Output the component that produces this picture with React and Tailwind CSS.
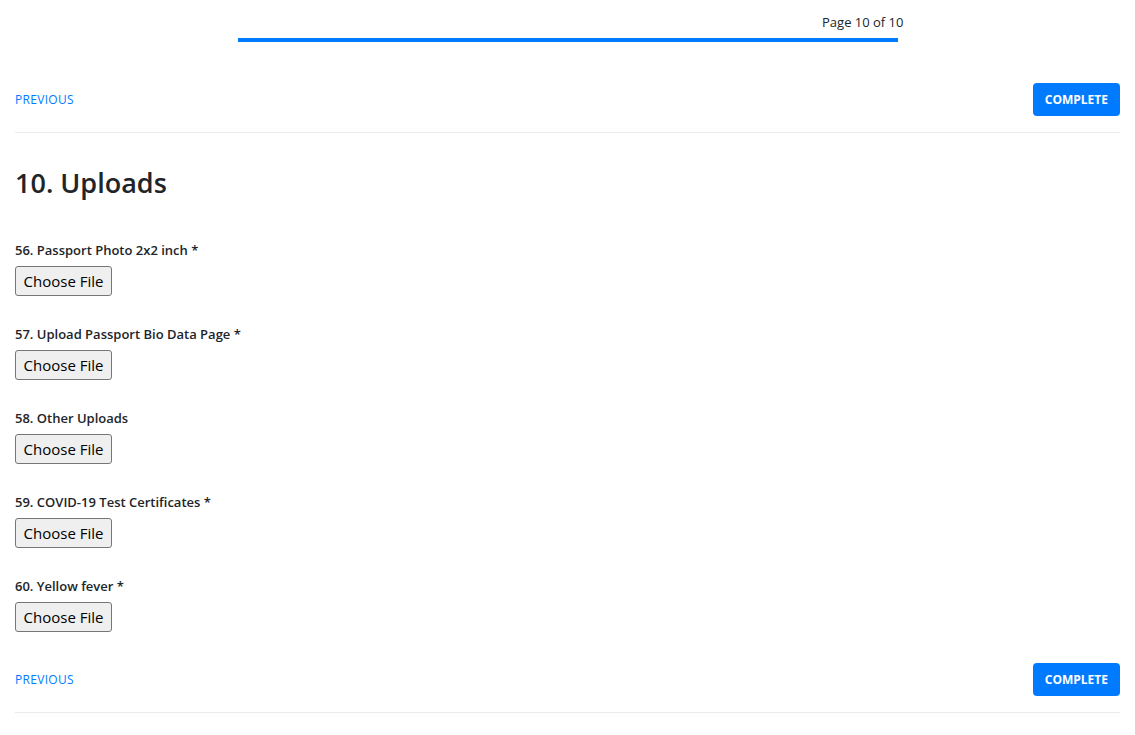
export default function App() {
  const fields = [
    "56. Passport Photo 2x2 inch *",
    "57. Upload Passport Bio Data Page *",
    "58. Other Uploads",
    "59. COVID-19 Test Certificates *",
    "60. Yellow fever *",
  ];
  const Nav = () => (
    <div className="flex items-center justify-between h-[33px] border-b border-[#e9ecef] box-content pb-4">
      <span className="text-[12px] text-[#007bff] font-medium tracking-wide">PREVIOUS</span>
      <button className="h-[33px] px-3 rounded bg-[#007bff] text-white text-[12px] font-bold">COMPLETE</button>
    </div>
  );
  return (
    <div className="bg-white px-[15px] text-[#212529] w-[1135px] h-[735px]" style={{ fontFamily: '"Open Sans","Noto Sans",sans-serif' }}>
      <div className="pt-[12px] flex flex-col items-center">
        <div className="w-[660px] ml-[12px] flex justify-end text-[13px] leading-[20px]">Page 10 of 10</div>
        <div className="w-[660px] h-[4px] bg-[#007bff] mt-[6px]" />
      </div>
      <div className="mt-[41px]"><Nav /></div>
      <h1 className="mt-[33px] text-[27px] leading-[34px] font-semibold">10. Uploads</h1>
      <div className="mt-[41px] flex flex-col gap-[29px]">
        {fields.map((f) => (
          <div key={f} className="flex flex-col items-start gap-[7px]">
            <div className="text-[13px] leading-[18px] font-semibold">{f}</div>
            <button className="h-[30px] w-[97px] border border-[#767676] rounded-[3px] bg-[#efefef] text-[15px] text-black">Choose File</button>
          </div>
        ))}
      </div>
      <div className="mt-[31px]"><Nav /></div>
    </div>
  );
}
